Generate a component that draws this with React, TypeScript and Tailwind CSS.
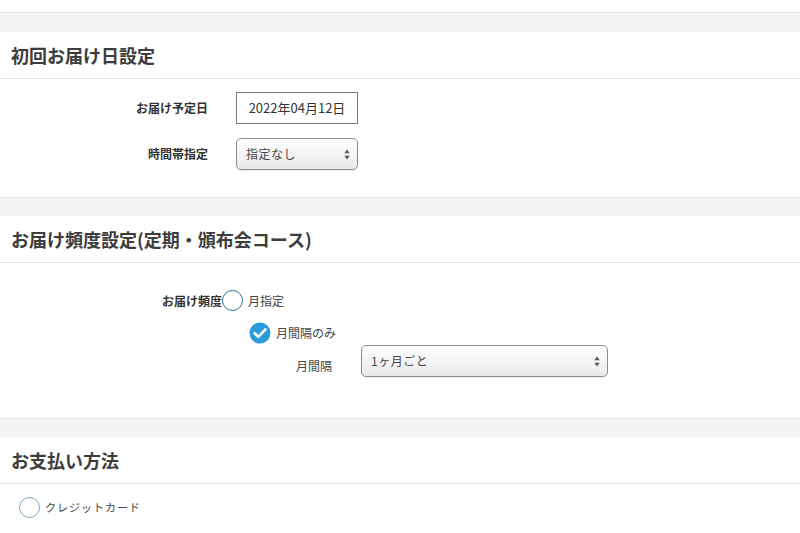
import React from "react";

const font = { fontFamily: '"Noto Sans CJK JP", "Noto Sans", sans-serif' };

const Band: React.FC<{ h: string }> = ({ h }) => (
  <div className={`bg-[#f4f4f4] border-t border-[#e6e6e6] ${h}`} />
);

const Header: React.FC<{ title: string }> = ({ title }) => (
  <div className="h-[47px] flex items-center px-[11px] border-b border-[#e2e2e2]">
    <h2 className="text-[18px] font-bold text-[#3d3d3d]">{title}</h2>
  </div>
);

const SelectBox: React.FC<{ value: string; width: string }> = ({ value, width }) => (
  <div
    className={`${width} h-[32px] rounded-[5px] border border-[#8c8c8c] bg-gradient-to-b from-white to-[#e9e9e9] shadow-[inset_0_1px_1px_rgba(255,255,255,0.9),0_1px_1px_rgba(0,0,0,0.08)] flex items-center justify-between pl-[9px] pr-[7px]`}
  >
    <span className="text-[12px] text-[#444] tracking-[0.5px]">{value}</span>
    <svg width="6" height="11" viewBox="0 0 6 11">
      <path d="M3 0.5 L5.6 4.2 L0.4 4.2 Z" fill="#555" />
      <path d="M3 10.5 L5.6 6.8 L0.4 6.8 Z" fill="#555" />
    </svg>
  </div>
);

const Radio: React.FC<{ color: string }> = ({ color }) => (
  <span className={`inline-block w-[21px] h-[21px] rounded-full border-[1.5px] ${color} bg-white`} />
);

const Checked: React.FC = () => (
  <svg width="22" height="22" viewBox="0 0 22 22">
    <circle cx="11" cy="11" r="10.5" fill="#2b9bd9" />
    <path d="M5.6 11.2 L9.3 14.8 L16.4 7.4" fill="none" stroke="#fff" strokeWidth="2.6" strokeLinecap="round" strokeLinejoin="round" />
  </svg>
);

const App: React.FC = () => {
  return (
    <div className="w-[800px] h-[533px] overflow-hidden bg-white" style={font}>
      <div className="h-[12px]" />
      <Band h="h-[20px]" />

      {/* 初回お届け日 */}
      <Header title="初回お届け日設定" />
      <div className="pt-[13px] pb-[27px] flex flex-col gap-[14px]">
        <div className="flex items-center">
          <div className="w-[208px] text-right text-[12px] font-bold text-[#333]">お届け予定日</div>
          <div className="ml-[28px] w-[122px] h-[32px] border border-[#777] flex items-center justify-center text-[13px] text-[#333]">
            2022年04月12日
          </div>
        </div>
        <div className="flex items-center">
          <div className="w-[208px] text-right text-[12px] font-bold text-[#333]">時間帯指定</div>
          <div className="ml-[28px]">
            <SelectBox value="指定なし" width="w-[122px]" />
          </div>
        </div>
      </div>

      <Band h="h-[19px]" />

      {/* お届け頻度 */}
      <Header title="お届け頻度設定(定期・頒布会コース)" />
      <div className="pt-[27px] pb-[41px]">
        <div className="flex items-center">
          <div className="w-[222px] text-right text-[12px] font-bold text-[#333]">お届け頻度</div>
          <Radio color="border-[#2d6f97]" />
          <span className="ml-[5px] text-[12px] text-[#444]">月指定</span>
        </div>
        <div className="flex items-center mt-[11px] pl-[249px]">
          <Checked />
          <span className="ml-[5px] text-[12px] text-[#444]">月間隔のみ</span>
        </div>
        <div className="flex items-start mt-[1px]">
          <div className="w-[332px] text-right text-[12px] text-[#444] pt-[12px]">月間隔</div>
          <div className="ml-[29px]">
            <SelectBox value="1ヶ月ごと" width="w-[247px]" />
          </div>
        </div>
      </div>

      <Band h="h-[19px]" />

      {/* お支払い方法 */}
      <Header title="お支払い方法" />
      <div className="pt-[13px] flex items-center pl-[19px]">
        <Radio color="border-[#7ba9b7]" />
        <span className="ml-[5px] text-[11px] text-[#444] tracking-[1px]">クレジットカード</span>
      </div>
    </div>
  );
};

export default App;
